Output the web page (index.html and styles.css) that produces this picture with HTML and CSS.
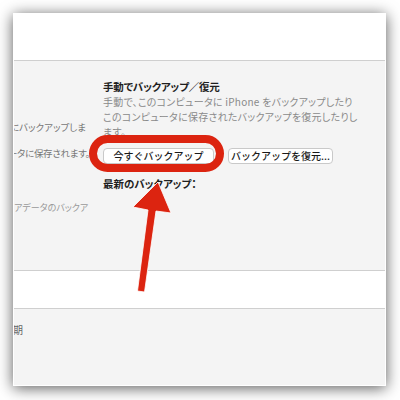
FILE: index.html
```html
<!DOCTYPE html>
<html lang="ja">
<head>
  <meta charset="UTF-8" />
  <title>バックアップ</title>
  <link rel="stylesheet" href="styles.css">
</head>
<body>

<div class="window">
  <div class="band top"></div>

  <section class="backup">
    <div class="left">
      <p class="l1">にバックアップしま</p>
      <p class="l2">ータに保存されます。</p>
      <p class="l3">アデータのバックア</p>
    </div>
    <div class="right">
      <h3>手動でバックアップ／復元</h3>
      <p class="desc">手動で、このコンピュータに iPhone をバックアップしたり<br>このコンピュータに保存されたバックアップを復元したりし<br>ます。</p>
      <div class="buttons">
        <button class="btn now">今すぐバックアップ</button>
        <button class="btn restore">バックアップを復元...</button>
      </div>
      <h4>最新のバックアップ：</h4>
    </div>
  </section>

  <div class="band mid"></div>

  <section class="options">
    <p class="l4">期</p>
  </section>
</div>

<!-- annotation drawn over the screenshot -->
<svg class="marks" width="400" height="400" viewBox="0 0 400 400">
  <rect x="93" y="139" width="127" height="29" rx="14.5" fill="none" stroke="#dc2410" stroke-width="8"/>
  <path d="M144.5 292 L137.5 291 L148 210 L133 207 L158 182 L171 213 L156 211 Z" fill="#dc2410" stroke="#fff" stroke-width="0.8" stroke-linejoin="round"/>
</svg>

</body>
</html>
```

FILE: styles.css
```css
* { box-sizing: border-box; }
body {
  margin: 0;
  width: 400px;
  height: 400px;
  position: relative;
  background: #fff;
  font-family: "Noto Sans CJK JP", "Noto Sans", sans-serif;
  font-feature-settings: "palt";
  overflow: hidden;
}
.window {
  margin: 13px 0 0 13px;
  width: 373px;
  height: 373px;
  border: 1px solid #fff;
  background: #f4f4f4;
  box-shadow: 0 2px 14px rgba(0,0,0,0.65);
  overflow: hidden;
}
.band {
  background: #fff;
  border-bottom: 1px solid #cfcfcf;
}
.band.top { height: 47px; }
.band.mid { height: 38px; }
.backup {
  display: grid;
  grid-template-columns: 89px 1fr;
  height: 210px;
  border-bottom: 1px solid #cfcfcf;
}
p, h3, h4 { margin: 0; white-space: nowrap; }
.left { color: #777; font-size: 9.5px; line-height: 14px; }
.left .l1 { margin: 59px 0 0 -4px; }
.left .l2 { margin: 12px 0 0 -6px; letter-spacing: -0.3px; }
.left .l3 { margin: 41px 0 0 0; font-size: 9px; color: #999; }
.right { padding-top: 19px; }
h3 {
  font-size: 10.5px;
  line-height: 14px;
  letter-spacing: -0.2px;
  color: #1e1e1e;
  font-weight: bold;
}
.desc {
  font-size: 10px;
  line-height: 15px;
  letter-spacing: 0.25px;
  color: #8a8a8a;
}
.buttons {
  display: flex;
  gap: 14px;
  margin-top: 9px;
}
.btn {
  height: 16px;
  padding: 0;
  background: #fff;
  border: 1px solid #c9c9c9;
  border-radius: 4px;
  font-family: inherit;
  font-size: 10px;
  font-weight: 500;
  line-height: 14px;
  color: #1a1a1a;
}
.btn.now { width: 111px; }
.btn.restore { width: 105px; }
h4 {
  margin-top: 13px;
  font-size: 10.5px;
  line-height: 14px;
  color: #1e1e1e;
  font-weight: bold;
}
.options { padding-top: 14px; }
.l4 { font-size: 10px; color: #666; margin-left: -1px; line-height: 14px; }
.marks {
  position: absolute;
  top: 0;
  left: 0;
}
```
